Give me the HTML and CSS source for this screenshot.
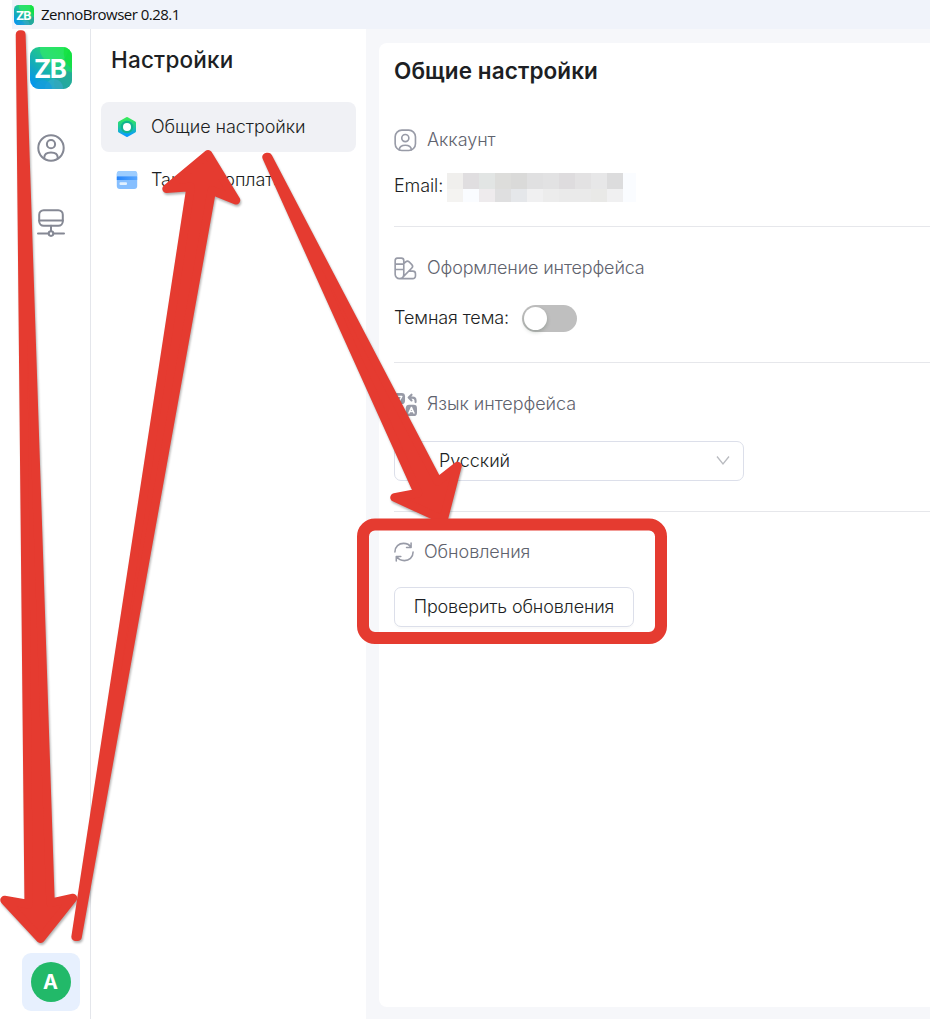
FILE: index.html
```html
<!DOCTYPE html>
<html lang="ru">
<head>
<meta charset="utf-8">
<title>ZennoBrowser 0.28.1</title>
<link rel="stylesheet" href="styles.css">
</head>
<body>
<svg class="defs" width="0" height="0" aria-hidden="true">
  <defs>
    <linearGradient id="brand" x1="0" y1="1" x2="1" y2="0">
      <stop offset="0" stop-color="#0090ff"/><stop offset=".28" stop-color="#12a5c4"/>
      <stop offset=".62" stop-color="#22cc85"/><stop offset="1" stop-color="#12e33c"/>
    </linearGradient>
    <clipPath id="tile"><rect width="42" height="42" rx="9"/></clipPath>
    <symbol id="logo" viewBox="0 0 42 42">
      <g clip-path="url(#tile)">
        <rect width="42" height="42" fill="url(#brand)"/>
        <circle cx="24" cy="2" r="14" fill="#34ef65" opacity=".55"/>
        <path d="M34 0h8v22q-10-8-8-22z" fill="#12e33c" opacity=".7"/>
        <circle cx="36" cy="36" r="12" fill="#279f9e" opacity=".7"/>
        <circle cx="24" cy="41" r="9" fill="#3eaccf" opacity=".55"/>
        <circle cx="13" cy="42" r="9" fill="#179ddd" opacity=".7"/>
      </g>
      <text x="4" y="30.700" class="logo-text">ZB</text>
    </symbol>
  </defs>
</svg>
<div class="window">
  <header class="titlebar">
    <svg class="title-logo"><use href="#logo"/></svg>
    <span class="title-text">ZennoBrowser 0.28.1</span>
  </header>
  <div class="body">
    <aside class="rail">
      <svg class="rail-logo"><use href="#logo"/></svg>
      <svg class="rail-icon user" viewBox="0 0 28 28"><circle cx="14" cy="14" r="12.7"/><circle cx="14" cy="10.2" r="4.1"/><path d="M7.3 24.2v-.7c0-3.300 2.500-5 6.700-5s6.700 1.700 6.700 5v.7"/></svg>
      <svg class="rail-icon proxy" viewBox="0 0 28 28"><rect x="2.200" y="1.200" width="23.600" height="15.600" rx="4.500"/><path d="M2.200 11.400h23.600M14 16.800v5.400M1 24.600h10.500M16.500 24.600H27"/><circle cx="14" cy="24.600" r="2.300"/></svg>
      <div class="profile"><span class="avatar">A</span></div>
    </aside>
    <nav class="menu">
      <h2 class="menu-title">Настройки</h2>
      <div class="menu-item active">
        <svg class="menu-icon" viewBox="0 0 22 22">
          <defs><linearGradient id="hex" x1="0" y1="0" x2="0" y2="1"><stop offset="0" stop-color="#35e95d"/><stop offset=".5" stop-color="#1fc89b"/><stop offset="1" stop-color="#079bff"/></linearGradient></defs>
          <path d="M11 2.600l7.500 4.200v8.400L11 19.400l-7.500-4.200V6.800z" fill="url(#hex)" stroke="url(#hex)" stroke-width="3" stroke-linejoin="round"/>
          <circle cx="11" cy="11" r="6.200" fill="#11b58e"/><circle cx="11" cy="11" r="4" fill="#fff"/>
        </svg>
        <span class="label">Общие настройки</span>
      </div>
      <div class="menu-item">
        <svg class="menu-icon" viewBox="0 0 22 22"><defs><linearGradient id="card" x1="0" y1="0" x2="1" y2="0"><stop offset="0" stop-color="#2684fa"/><stop offset="1" stop-color="#5aa8ff"/></linearGradient></defs><rect x=".8" y="2" width="20.400" height="18" rx="3" fill="#86bfff"/><path d="M.8 7V5a3 3 0 0 1 3-3h14.400a3 3 0 0 1 3 3v2z" fill="#9dcdff"/><path d="M.8 7.500h20.400v3.500H.8z" fill="url(#card)"/><rect x="3.500" y="13.300" width="7.500" height="2.700" rx="1" fill="#e2f1ff"/></svg>
        <span class="label">Тариф и оплата</span>
      </div>
    </nav>
    <main class="main">
      <div class="panel">
        <h1 class="page-title">Общие настройки</h1>
        <section class="section account">
          <div class="section-title">
            <svg viewBox="0 0 24 24"><rect x="1.200" y="1.200" width="21.200" height="21.200" rx="7"/><circle cx="11.800" cy="9.500" r="3.700"/><path d="M5.500 21.500c.3-3 2.500-4.500 6.300-4.500s6 1.500 6.300 4.500"/></svg>
            <span class="label">Аккаунт</span>
          </div>
          <div class="row"><span class="label email">Email:</span>
            <div class="mosaic">
              <i class="p1"></i><i class="p2"></i><i class="p3"></i><i class="p4"></i><i class="p5"></i><i class="p6"></i><i class="p7"></i><i class="p8"></i><i class="p9"></i><i class="p10"></i><i class="p11"></i><i class="p12"></i>
              <i class="p13"></i><i class="p12"></i><i class="p14"></i><i class="p15"></i><i class="p16"></i><i class="p17"></i><i class="p18"></i><i class="p19"></i><i class="p19"></i><i class="p20"></i><i class="p17"></i><i class="p12"></i>
            </div>
          </div>
        </section>
        <section class="section theme">
          <div class="section-title">
            <svg viewBox="0 0 24 24"><path d="M3.500 1.200h4.200a2.500 2.500 0 0 1 2.500 2.500v14.400a4.500 4.500 0 0 1-9 0V3.700a2.500 2.500 0 0 1 2.300-2.500zM1.200 7.500h9M1.200 13h9M10.200 7l2-1.900a2.600 2.600 0 0 1 3.600 0l2.800 2.800a2.600 2.600 0 0 1 0 3.600L9 21.200M15.300 14.800h4.300a2.800 2.800 0 0 1 2.800 2.800v2.200a2.800 2.800 0 0 1-2.800 2.800H5.700"/></svg>
            <span class="label design">Оформление интерфейса</span>
          </div>
          <div class="row"><span class="label dark">Темная тема:</span><span class="switch"><span class="knob"></span></span></div>
        </section>
        <section class="section language">
          <div class="section-title">
            <svg viewBox="0 0 24 24"><g class="solid"><rect x="0" y="0" width="11.500" height="11.500" rx="3.500"/><rect x="12.300" y="12.300" width="11.700" height="11.700" rx="3.500"/></g><path class="letter" d="M3.500 3.500h4.700L5.500 8.500M15.500 21l2.700-6 2.700 6M16.500 19.300h3.400"/><path class="turn" d="M22.500 9.500V8a3.200 3.200 0 0 0-3.200-3.200H16M18.300 1.800l-3 3 3 3"/></svg>
            <span class="label">Язык интерфейса</span>
          </div>
          <div class="select"><span class="label">Русский</span><svg class="chevron" viewBox="0 0 14 12"><path d="M1 1.500l6 7.500 6-7.500"/></svg></div>
        </section>
        <section class="section updates">
          <div class="section-title">
            <svg viewBox="0 0 22 22"><path d="M1 11C1 5 5.500 1.500 10.500 1.500c3.300 0 6.500 1.500 8 4.200M18.800 1v5h-5M21 11c0 6-4.500 9.500-9.500 9.500-3.500 0-6.700-1.500-8.300-4.300M2.500 21v-5h5"/></svg>
            <span class="label">Обновления</span>
          </div>
          <button class="check"><span class="label">Проверить обновления</span></button>
        </section>
      </div>
    </main>
  </div>
</div>
<svg class="marks" viewBox="0 0 930 1019">
  <g class="arrows">
    <path d="M20 34.500h1.300L50.500 902.800 73 898 40.500 938.800 4.500 900 28.700 904.200z"/>
    <path d="M75.600 936.800L190.700 187 166.500 188.700 208 154.300 236 200.300 211.800 190.500 77.600 936.800z"/>
    <path d="M266.500 157h1.500L437.800 481.500 457.500 466 443.500 520 394.500 497.500 418 493z"/>
  </g>
  <rect class="frame" x="363" y="524.500" width="298" height="113.500" rx="12"/>
</svg>
</body>
</html>
```
FILE: styles.css
```css
* { box-sizing: border-box; }
body { margin: 0; background: #fff; font-family: Inter, "Liberation Sans", sans-serif; color: #1d1f24; overflow: hidden; }
.defs { position: absolute; }
.window { width: 930px; height: 1019px; display: flex; flex-direction: column; padding-left: 12px; }
.titlebar { height: 29px; flex: none; background: #f0f3fa; display: flex; align-items: center; padding-left: 2px; gap: 7px; font: 15px "Open Sans", "Noto Sans", sans-serif; color: #111; }
.title-logo { width: 20px; height: 20px; }
.title-text { letter-spacing: -.52px; padding-bottom: 2px; }
.logo-text { font: 700 26px Inter, sans-serif; letter-spacing: -1.6px; fill: #fff; }
.body { flex: 1; display: flex; min-height: 0; }
.rail { width: 79px; border-right: 1px solid #e4e6eb; display: flex; flex-direction: column; align-items: center; padding: 18px 1px 8px 0; }
.rail-logo { width: 42px; height: 42px; flex: none; }
.rail-icon { width: 28px; height: 28px; fill: none; stroke: #858894; stroke-width: 2; flex: none; overflow: visible; stroke-linecap: round; }
.user { margin-top: 45px; }
.proxy { margin-top: 47px; }
.profile { margin-top: auto; width: 58px; height: 58px; border-radius: 9px; background: #e7f0fe; display: grid; place-items: center; }
.avatar { width: 40px; height: 40px; border-radius: 50%; background: #22b969; color: #fff; font-size: 20px; font-weight: 700; line-height: 40px; text-align: center; }
.menu { width: 275px; padding: 16px 10px; }
.menu-title { margin: 0 0 27px 10px; font-size: 22.500px; font-weight: 450; letter-spacing: .2px; line-height: 30px; }
.menu-item { height: 50px; border-radius: 8px; display: flex; align-items: center; gap: 13px; padding-left: 15px; font-size: 18px; font-weight: 300; white-space: nowrap; margin-bottom: 3px; }
.active { background: #f0f1f5; }
.menu-icon { width: 22px; height: 22px; }
.label { padding-bottom: 2px; letter-spacing: -.06px; }
.main { flex: 1; background: #f6f7fa; padding: 14px 0 12px 13px; }
.panel { height: 964px; background: #fff; border-radius: 8px 0 0 8px; padding: 13px 0 0 15px; }
.page-title { margin: 0; height: 30px; line-height: 30px; font-size: 22.500px; font-weight: 600; letter-spacing: .1px; }
.section { display: flex; flex-direction: column; align-items: stretch; border-bottom: 1px solid #e6e7eb; font-size: 18px; font-weight: 300; white-space: nowrap; }
.section-title { height: 28px; display: flex; align-items: center; gap: 10px; color: #5f636e; }
.section-title svg { width: 23px; height: 23px; fill: none; stroke: #989ba7; stroke-width: 1.7; overflow: visible; stroke-linejoin: round; stroke-linecap: round; }
.section-title .solid { fill: #989ba7; stroke: none; }
.section-title .letter { stroke: #fff; stroke-width: 1.4; }
.section-title .turn { stroke-width: 2.2; }
.design { letter-spacing: -.15px; }
.row { height: 28px; display: flex; align-items: center; }
.email, .dark { letter-spacing: -.1px; }
.account { padding: 40px 0 26px; gap: 18px; }
.theme { padding: 27px 0 30px; gap: 22px; }
.language { padding: 27px 0 30px; gap: 23px; }
.updates { padding-top: 26px; gap: 21px; border: 0; align-items: flex-start; }
.updates .section-title svg { width: 20px; height: 20px; }
.mosaic { margin-left: auto; margin-right: 294px; width: 189px; height: 29px; display: grid; grid-template-columns: repeat(11, 16px) 13px; grid-template-rows: 16px 13px; transform: translateY(1px); }
.p1 { background: #f0efed; } .p2 { background: #e0dee0; } .p3 { background: #e2e5e4; } .p4 { background: #dddddb; }
.p5 { background: #dadad9; } .p6 { background: #e0e0e1; } .p7 { background: #e2e2e3; } .p8 { background: #dedcde; }
.p9 { background: #e3e2e3; } .p10 { background: #e7e7e8; } .p11 { background: #dcdcdd; } .p12 { background: #fafcff; }
.p13 { background: #f4f3f1; } .p14 { background: #eeebed; } .p15 { background: #dfdfe0; } .p16 { background: #e5e7ea; }
.p17 { background: #f0f0f1; } .p18 { background: #ececec; } .p19 { background: #eaeaea; } .p20 { background: #e9e9e7; }
.switch { width: 55px; height: 27px; margin-left: auto; margin-right: 353px; border-radius: 14px; background: #bfbfbf; padding: 2px; }
.knob { display: block; width: 23px; height: 23px; border-radius: 50%; background: #fff; box-shadow: 0 2px 4px rgba(0,35,11,.2); }
.select { width: 350px; height: 40px; border: 1px solid #dcdfea; border-radius: 7px; display: flex; align-items: center; justify-content: space-between; padding: 0 13px 0 44px; }
.chevron { width: 14px; height: 12px; fill: none; stroke: #b9bbc0; stroke-width: 1.3; }
.check { width: 240px; height: 40px; border: 1px solid #dcdfea; border-radius: 7px; background: #fff; box-shadow: 0 2px 1px rgba(0,0,0,.02); font: 300 18px Inter, sans-serif; color: #1d1f24; padding: 0; white-space: nowrap; display: flex; align-items: center; justify-content: center; }
.check .label { letter-spacing: -.16px; }
.marks { position: absolute; left: 0; top: 0; width: 930px; height: 1019px; pointer-events: none; }
.arrows { fill: #e53b30; stroke: #e53b30; stroke-width: 8.500; stroke-linejoin: round; filter: drop-shadow(1px 2px 1px rgba(0,0,0,.3)); }
.frame { fill: none; stroke: #e53b30; stroke-width: 12; }
```
